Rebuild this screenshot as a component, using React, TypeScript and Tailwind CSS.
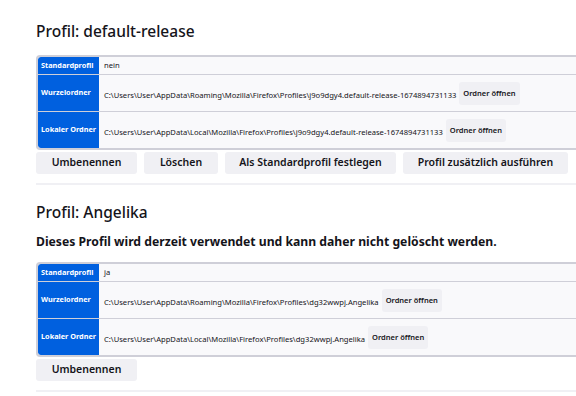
import React from 'react'

type Profile = {
  name: string
  isDefault: boolean
  root: string
  local: string
  inUse?: boolean
}

const profiles: Profile[] = [
  {
    name: 'default-release',
    isDefault: false,
    root: 'C:\\Users\\User\\AppData\\Roaming\\Mozilla\\Firefox\\Profiles\\j9o9dgy4.default-release-1674894731133',
    local: 'C:\\Users\\User\\AppData\\Local\\Mozilla\\Firefox\\Profiles\\j9o9dgy4.default-release-1674894731133',
  },
  {
    name: 'Angelika',
    isDefault: true,
    inUse: true,
    root: 'C:\\Users\\User\\AppData\\Roaming\\Mozilla\\Firefox\\Profiles\\dg32wwpj.Angelika',
    local: 'C:\\Users\\User\\AppData\\Local\\Mozilla\\Firefox\\Profiles\\dg32wwpj.Angelika',
  },
]

function Label({ children, first, last }: { children: React.ReactNode; first?: boolean; last?: boolean }) {
  return (
    <th
      className={
        'bg-[#0060df] text-white text-left font-bold text-[7.3px] px-[3px] whitespace-nowrap border-b border-[#cfcfd8] ' +
        (first ? 'rounded-tl-[3px] ' : '') +
        (last ? 'rounded-bl-[3px] border-b-0' : '')
      }
    >
      {children}
    </th>
  )
}

function FolderRow({ label, path, last }: { label: string; path: string; last?: boolean }) {
  return (
    <tr className="h-[37px]">
      <Label last={last}>{label}</Label>
      <td className={'px-[5px] whitespace-nowrap ' + (last ? '' : 'border-b border-[#cfcfd8]')}>
        <span className="text-[7.6px]">{path}</span>
        <button className="ml-[3px] h-[23px] px-[4px] rounded-[3px] bg-[#f0f0f4] text-[7.5px] font-semibold align-middle">
          Ordner öffnen
        </button>
      </td>
    </tr>
  )
}

function ProfileSection({ p }: { p: Profile }) {
  return (
    <section>
      <h2 className="text-[15.5px] leading-[22px] font-medium">Profil: {p.name}</h2>
      {p.inUse && (
        <p className="mt-[10px] text-[12.2px] leading-[18px] font-bold">
          Dieses Profil wird derzeit verwendet und kann daher nicht gelöscht werden.
        </p>
      )}
      <div className={(p.inUse ? 'mt-[11px]' : 'mt-[13px]') + ' w-[560px] border-2 border-r-0 border-[#cfcfd8] rounded-l-[4px] overflow-hidden bg-[#f9f9fb]'}>
        <table className="border-collapse w-full table-fixed">
          <colgroup>
            <col className="w-[61px]" />
            <col />
          </colgroup>
          <tbody>
            <tr className="h-[17px]">
              <Label first>Standardprofil</Label>
              <td className="px-[5px] text-[7.6px] border-b border-[#cfcfd8]">{p.isDefault ? 'ja' : 'nein'}</td>
            </tr>
            <FolderRow label="Wurzelordner" path={p.root} />
            <FolderRow label="Lokaler Ordner" path={p.local} last />
          </tbody>
        </table>
      </div>
      <div className="mt-[2px] flex gap-[7px] text-[10.5px] font-semibold">
        <button className="h-[22px] w-[101px] rounded-[3px] bg-[#f0f0f4]">Umbenennen</button>
        {!p.inUse && (
          <>
            <button className="h-[22px] w-[74px] rounded-[3px] bg-[#f0f0f4]">Löschen</button>
            <button className="h-[22px] w-[171px] rounded-[3px] bg-[#f0f0f4]">Als Standardprofil festlegen</button>
            <button className="h-[22px] w-[165px] rounded-[3px] bg-[#f0f0f4]">Profil zusätzlich ausführen</button>
          </>
        )}
      </div>
      <div className="mt-[9px] h-[2px] bg-[#f0f0f4]" />
    </section>
  )
}

export default function App() {
  return (
    <div
      className="h-[396px] w-[576px] overflow-hidden bg-white text-[#15141a] pl-[36px] pt-[20px]"
      style={{ fontFamily: '"Noto Sans", sans-serif' }}
    >
      <ProfileSection p={profiles[0]} />
      <div className="mt-[16px]">
        <ProfileSection p={profiles[1]} />
      </div>
    </div>
  )
}
